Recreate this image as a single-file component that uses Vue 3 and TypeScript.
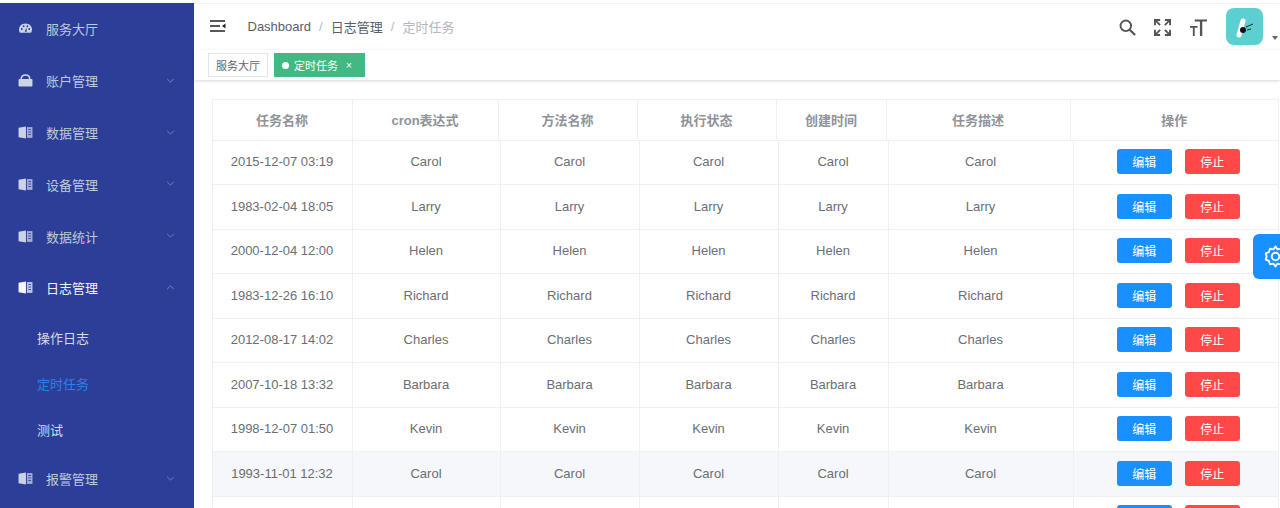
<template>
  <div class="layout">
    <aside class="sidebar">
      <template v-for="item in menu" :key="item.name">
        <div class="menu-item" :class="{ open: item.open }">
          <svg class="menu-icon" viewBox="0 0 16 14">
            <template v-if="item.icon === 'gauge'">
              <path d="M8 1.500C3.800 1.500 1 4.600 1 8.200c0 1.400.4 2.500 1 3.300h12c.6-.8 1-1.900 1-3.300 0-3.600-2.800-6.700-7-6.700z" fill="currentColor" />
              <circle cx="4" cy="7.500" r="1" fill="#2c3e98" />
              <circle cx="6" cy="4.600" r="1" fill="#2c3e98" />
              <circle cx="10" cy="4.600" r="1" fill="#2c3e98" />
              <circle cx="12" cy="7.500" r="1" fill="#2c3e98" />
              <path d="M7.200 10.500L9 6l.4 4.500z" fill="#2c3e98" />
            </template>
            <template v-else-if="item.icon === 'lock'">
              <path d="M3.500 7V5C3.500 2.400 5.400 1 8 1s4.500 1.400 4.500 4v2" fill="none" stroke="currentColor" stroke-width="1.700" />
              <rect x="0.500" y="5.500" width="15" height="8" rx="1" fill="currentColor" />
            </template>
            <template v-else>
              <path d="M0.500 1.800L8.500 0.500v13l-8-1.300z" fill="currentColor" />
              <path d="M9.500 1.200h6v11.600h-6z" fill="currentColor" opacity="0.75" />
              <path d="M11 3.800h3M11 6.500h3M11 9.200h3" stroke="#2c3e98" stroke-width="0.9" />
            </template>
          </svg>
          <span class="menu-label">{{ item.name }}</span>
          <svg v-if="item.arrow" class="chevron" viewBox="0 0 10 6">
            <path :d="item.open ? 'M1 5l4-4 4 4' : 'M1 1l4 4 4-4'" fill="none" stroke="currentColor" stroke-width="1" />
          </svg>
        </div>
        <div v-if="item.open" class="sub-menu">
          <div
            v-for="sub in subMenu"
            :key="sub"
            class="sub-item"
            :class="{ active: sub === '定时任务' }"
          >
            {{ sub }}
          </div>
        </div>
      </template>
    </aside>

    <main class="main">
      <header class="navbar">
        <svg class="hamburger" viewBox="0 0 16 12">
          <path d="M0 1h15M0 6h10M0 11h15" stroke="#222" stroke-width="1.600" />
          <path d="M15.500 3.500v5L12 6z" fill="#222" />
        </svg>
        <nav class="breadcrumb">
          <span>Dashboard</span>
          <i>/</i>
          <span>日志管理</span>
          <i>/</i>
          <span class="current">定时任务</span>
        </nav>
        <div class="nav-right">
          <svg class="nav-icon search" viewBox="0 0 18 18">
            <circle cx="7.200" cy="7.200" r="5.600" fill="none" stroke="#555" stroke-width="2" />
            <path d="M11.400 11.400L17 17" stroke="#555" stroke-width="2.400" />
          </svg>
          <svg class="nav-icon full" viewBox="0 0 18 18">
            <g fill="none" stroke="#555" stroke-width="2">
              <path d="M1 6.500V1h5.500M1 1l5.500 5.500" />
              <path d="M17 6.500V1h-5.500M17 1l-5.500 5.500" />
              <path d="M1 11.500V17h5.500M1 17l5.500-5.500" />
              <path d="M17 11.500V17h-5.500M17 17l-5.500-5.500" />
            </g>
          </svg>
          <svg class="nav-icon size" viewBox="0 0 18 18">
            <path d="M5 0.500h13v2.200h-5V18h-2.500V2.700H5z" fill="#555" />
            <path d="M0 7.500h8v1.800H5V18H3V9.300H0z" fill="#555" />
          </svg>
          <div class="avatar">
            <svg viewBox="0 0 37 37">
              <path d="M17 13l-4 14" stroke="#fff" stroke-width="5" stroke-linecap="round" />
              <circle cx="17" cy="22" r="3" fill="#111" />
              <path d="M20 19l7-3M21 22l4-1" stroke="#222" stroke-width="1" />
            </svg>
          </div>
          <span class="caret"></span>
        </div>
      </header>

      <div class="tags">
        <span class="tag">服务大厅</span>
        <span class="tag active"><b class="dot"></b>定时任务<em>×</em></span>
      </div>

      <section class="content">
        <div class="table">
          <div class="row head">
            <div v-for="h in headers" :key="h" class="cell">{{ h }}</div>
          </div>
          <div
            v-for="(row, i) in rows"
            :key="i"
            class="row body"
            :class="{ hover: i === 7 }"
          >
            <div class="cell">{{ row.time }}</div>
            <div v-for="n in 5" :key="n" class="cell">{{ row.name }}</div>
            <div class="cell ops">
              <button class="btn edit">{{ row.name && '编辑' }}</button>
              <button class="btn stop">{{ row.name && '停止' }}</button>
            </div>
          </div>
        </div>
      </section>

      <div class="settings">
        <svg viewBox="0 0 24 24">
          <path d="M12 2.500l2 2.600 3.300-.6 1 3.200 3.100 1.300-.9 3 .9 3-3.100 1.300-1 3.200-3.300-.6-2 2.600-2-2.600-3.300.6-1-3.200L2.600 15l.9-3-.9-3 3.100-1.300 1-3.200 3.300.6z" fill="none" stroke="#fff" stroke-width="1.800" stroke-linejoin="round" />
          <circle cx="12" cy="12" r="3.600" fill="none" stroke="#fff" stroke-width="1.800" />
        </svg>
      </div>
    </main>
  </div>
</template>

<script setup lang="ts">
interface MenuItem {
  name: string
  icon: 'gauge' | 'lock' | 'book'
  arrow: boolean
  open?: boolean
}

const menu: MenuItem[] = [
  { name: '服务大厅', icon: 'gauge', arrow: false },
  { name: '账户管理', icon: 'lock', arrow: true },
  { name: '数据管理', icon: 'book', arrow: true },
  { name: '设备管理', icon: 'book', arrow: true },
  { name: '数据统计', icon: 'book', arrow: true },
  { name: '日志管理', icon: 'book', arrow: true, open: true },
  { name: '报警管理', icon: 'book', arrow: true }
]

const subMenu = ['操作日志', '定时任务', '测试']

const headers = ['任务名称', 'cron表达式', '方法名称', '执行状态', '创建时间', '任务描述', '操作']

const rows = [
  { time: '2015-12-07 03:19', name: 'Carol' },
  { time: '1983-02-04 18:05', name: 'Larry' },
  { time: '2000-12-04 12:00', name: 'Helen' },
  { time: '1983-12-26 16:10', name: 'Richard' },
  { time: '2012-08-17 14:02', name: 'Charles' },
  { time: '2007-10-18 13:32', name: 'Barbara' },
  { time: '1998-12-07 01:50', name: 'Kevin' },
  { time: '1993-11-01 12:32', name: 'Carol' },
  { time: '', name: '' }
]
</script>

<style>
html,
body {
  margin: 0;
  height: 100%;
  overflow: hidden;
  background: #fff;
}
</style>

<style scoped>
.layout {
  display: flex;
  height: 505px;
  padding-top: 3px;
  overflow: hidden;
  font-family: "Liberation Sans", "Noto Sans CJK SC", sans-serif;
  font-size: 13px;
  color: #6b6e73;
}

.sidebar {
  width: 193.5px;
  flex: none;
  background: #2c3e98;
  color: #bfcbd9;
}

.menu-item {
  height: 51.8px;
  display: flex;
  align-items: center;
  position: relative;
}

.menu-item.open {
  color: #f0f3f8;
}

.menu-icon {
  width: 15px;
  height: 13px;
  margin: 0 13px 0 18px;
  color: #ccd3e4;
}

.menu-item.open .menu-icon {
  color: #f4f6fa;
}

.chevron {
  position: absolute;
  left: 166px;
  top: 23px;
  width: 9px;
  height: 5px;
  color: #7f8cc4;
}

.sub-menu {
  margin-bottom: 1.3px;
}

.sub-item {
  height: 46px;
  box-sizing: border-box;
  padding: 3px 0 0 37px;
  line-height: 43px;
  color: #d6dbe9;
}

.sub-item.active {
  color: #2f80e8;
}

.main {
  flex: 1;
  min-width: 0;
  position: relative;
}

.navbar {
  height: 47px;
  display: flex;
  align-items: center;
  padding-left: 16px;
  box-sizing: border-box;
  border-top: 1px solid #f2f2f2;
}

.hamburger {
  width: 16px;
  height: 12px;
  margin-bottom: 3px;
}

.breadcrumb {
  margin: 0 0 2px 22px;
  display: flex;
  align-items: center;
  color: #5a5e66;
}

.breadcrumb i {
  font-style: normal;
  color: #b4b9c2;
  margin: 0 8px;
}

.breadcrumb .current {
  color: #b1b6bf;
}

.nav-right {
  margin-left: auto;
  display: flex;
  align-items: center;
  width: 161px;
  position: relative;
  height: 100%;
}

.nav-icon {
  width: 17px;
  height: 17px;
  margin-right: 18px;
}

.nav-icon.full,
.nav-icon.size {
  margin-right: 19px;
}

.avatar {
  width: 37px;
  height: 37px;
  margin-bottom: 2px;
  border-radius: 8px;
  background: #5ccfd0;
}

.avatar svg {
  display: block;
  width: 37px;
  height: 37px;
}

.caret {
  position: absolute;
  right: 2px;
  top: 32px;
  border: 3.5px solid transparent;
  border-top: 4px solid #666;
  border-bottom: 0;
}

.tags {
  height: 30px;
  display: flex;
  align-items: center;
  gap: 6px;
  padding-left: 14.5px;
  box-sizing: border-box;
  box-shadow: 0 1px 3px rgba(0, 0, 0, 0.16);
  font-size: 11px;
}

.tag {
  height: 24px;
  box-sizing: border-box;
  display: inline-flex;
  align-items: center;
  padding: 0 7px;
  border: 1px solid #e2e5ec;
  color: #5f6368;
}

.tag.active {
  width: 91px;
  padding: 0 7px;
  background: #42b983;
  border-color: #42b983;
  color: #fff;
}

.dot {
  width: 7px;
  height: 7px;
  border-radius: 50%;
  background: #fff;
  margin-right: 5px;
}

.tag em {
  font-style: normal;
  font-size: 10px;
  margin-left: 8px;
}

.content {
  padding: 19px 1px 0 18px;
}

.table {
  border-left: 1px solid #edf0f4;
  border-top: 1px solid #edf0f4;
}

.row {
  display: grid;
  border-bottom: 1px solid #edf0f4;
  box-sizing: border-box;
}

.row.head {
  height: 40.7px;
  grid-template-columns: 140px 146px 139px 139px 110px 184px 1fr;
  font-weight: 700;
  color: #909399;
}

.row.body {
  height: 44.5px;
  grid-template-columns: 140px 148px 139px 139px 110px 185px 1fr;
}

.row.hover {
  background: #f5f7fa;
}

.cell {
  display: flex;
  align-items: center;
  justify-content: center;
  border-right: 1px solid #edf0f4;
}

.row.body .cell:not(.ops) {
  padding-bottom: 1px;
}

.ops {
  gap: 13px;
  padding-left: 5px;
  padding-bottom: 1px;
  justify-content: center;
}

.btn {
  width: 55px;
  height: 25px;
  padding: 0;
  border: 0;
  border-radius: 3px;
  color: #fff;
  font: inherit;
  font-size: 12px;
}

.edit {
  background: #1890ff;
}

.stop {
  background: #ff4949;
}

.settings {
  position: absolute;
  right: 0;
  top: 231px;
  width: 27px;
  height: 45px;
  background: #1890ff;
  border-radius: 6px 0 0 6px;
  overflow: hidden;
}

.settings svg {
  position: absolute;
  left: 10px;
  top: 10px;
  width: 25px;
  height: 25px;
}
</style>
